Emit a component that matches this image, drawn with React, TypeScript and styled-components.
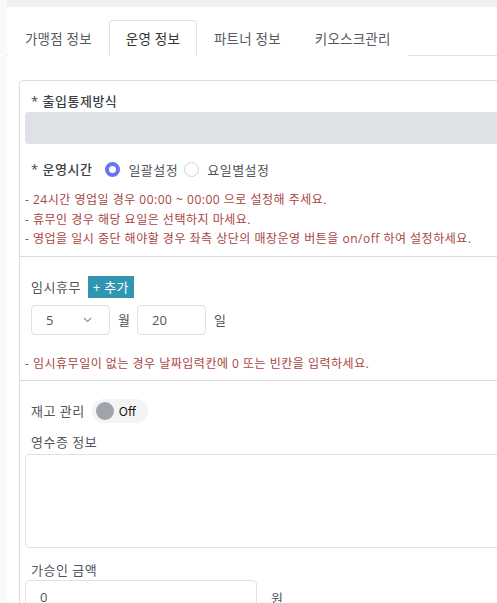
import styled, { createGlobalStyle } from "styled-components";

const GlobalStyle = createGlobalStyle`
    html, body {
        margin: 0;
        padding: 0;
        background: #f8f9fa;
        overflow: hidden;
    }
    body {
        font-family: "Open Sans", "Noto Sans CJK KR", sans-serif;
        color: #495057;
    }
`

const tabs = ["가맹점 정보", "운영 정보", "파트너 정보", "키오스크관리"]

const notes = [
    "- 24시간 영업일 경우 00:00 ~ 00:00 으로 설정해 주세요.",
    "- 휴무인 경우 해당 요일은 선택하지 마세요.",
    "- 영업을 일시 중단 해야할 경우 좌측 상단의 매장운영 버튼을 on/off 하여 설정하세요.",
]

export default function App() {
    return (
        <>
            <GlobalStyle />
            <Page>
                <TopStrip />
                <Content>
                    <TabBar>
                        {tabs.map((t, i) => (
                            <Tab key={t} active={i === 1}>{t}</Tab>
                        ))}
                    </TabBar>

                    <Panel>
                        <Section>
                            <Label strong>* 출입통제방식</Label>
                            <DisabledBar />
                            <Row gap={13}>
                                <Label strong>* 운영시간</Label>
                                <RadioGroup>
                                    <Radio checked />
                                    <RadioText>일괄설정</RadioText>
                                    <Radio />
                                    <RadioText>요일별설정</RadioText>
                                </RadioGroup>
                            </Row>
                            <Notes>
                                {notes.map(n => <Note key={n}>{n}</Note>)}
                            </Notes>
                        </Section>

                        <Section>
                            <Row gap={7}>
                                <Label>임시휴무</Label>
                                <AddButton>+ 추가</AddButton>
                            </Row>
                            <DateRow>
                                <Select>
                                    5
                                    <svg width="9" height="6" viewBox="0 0 9 6">
                                        <path d="M1 1l3.5 3.5L8 1" fill="none" stroke="#8a8f96" strokeWidth="1.1" />
                                    </svg>
                                </Select>
                                <Unit>월</Unit>
                                <Field width={69}>20</Field>
                                <Unit>일</Unit>
                            </DateRow>
                            <Notes top={19}>
                                <Note>- 임시휴무일이 없는 경우 날짜입력칸에 0 또는 빈칸을 입력하세요.</Note>
                            </Notes>
                        </Section>

                        <Section top={19}>
                            <Row gap={7}>
                                <Label>재고 관리</Label>
                                <Toggle>
                                    <Knob />
                                    Off
                                </Toggle>
                            </Row>
                            <Label top={10}>영수증 정보</Label>
                            <TextArea />
                            <Label top={12}>가승인 금액</Label>
                            <AmountRow>
                                <Field width={232} height={34}>0</Field>
                                <Unit>원</Unit>
                            </AmountRow>
                        </Section>
                    </Panel>
                </Content>
            </Page>
        </>
    )
}

const Page = styled.div`
    width: 600px;
    padding-left: 7px;
    min-height: 603px;
`

const TopStrip = styled.div`
    height: 7px;
    background: #eef0f4;
`

const Content = styled.div`
    background: #fff;
    padding-top: 13px;
    padding-bottom: 40px;
`

const TabBar = styled.div`
    display: flex;
    padding-left: 1px;
    border-bottom: 1px solid #dee2e6;
    height: 35px;
`

const Tab = styled.div<{ active?: boolean }>`
    display: flex;
    align-items: center;
    padding: 0 16px;
    font-size: 13.5px;
    letter-spacing: 0.2px;
    color: ${p => p.active ? "#333" : "#555b61"};
    border: 1px solid ${p => p.active ? "#dee2e6" : "transparent"};
    border-bottom: 1px solid ${p => p.active ? "#fff" : "transparent"};
    border-radius: 4px 4px 0 0;
    box-sizing: border-box;
    height: 36px;
    background: #fff;
`

const Panel = styled.div`
    margin: 24px 0 0 12px;
    border: 1px solid #dcdcdc;
    border-radius: 4px 0 0 0;
`

const Section = styled.div<{ top?: number }>`
    padding: 10px 0 7px 5px;
    & + & {
        border-top: 1px solid #dcdcdc;
        padding-top: ${p => p.top ?? 18}px;
    }
`

const Label = styled.div<{ strong?: boolean; top?: number }>`
    padding-left: 6px;
    margin-top: ${p => p.top ?? 0}px;
    font-size: 13px;
    letter-spacing: 0.5px;
    line-height: 20px;
    color: ${p => p.strong ? "#3a3f44" : "#4f555b"};
    font-weight: ${p => p.strong ? 500 : 400};
`

const DisabledBar = styled.div`
    margin-top: 1px;
    height: 32px;
    background: #dee1e6;
    border-radius: 4px;
`

const Row = styled.div<{ gap: number }>`
    display: flex;
    align-items: center;
    gap: ${p => p.gap}px;
    margin-top: 14px;
    height: 22px;
    &:first-child {
        margin-top: 0;
    }
`

const RadioGroup = styled.div`
    display: flex;
    align-items: center;
`

const Radio = styled.span<{ checked?: boolean }>`
    width: 15px;
    height: 15px;
    box-sizing: border-box;
    border-radius: 50%;
    border: ${p => p.checked ? "4px solid #6a72f2" : "1px solid #cfd2d6"};
    background: #fff;
    margin-right: 8px;
`

const RadioText = styled.span`
    font-size: 13px;
    letter-spacing: 0.5px;
    color: #4f555b;
    margin-right: 6px;
`

const Notes = styled.div<{ top?: number }>`
    margin-top: ${p => p.top ?? 10}px;
`

const Note = styled.div`
    font-size: 12px;
    letter-spacing: 0.5px;
    line-height: 19.5px;
    color: #a94442;
    white-space: nowrap;
`

const AddButton = styled.button`
    height: 22px;
    padding: 0 5px;
    border: none;
    background: #2f95b1;
    color: #fff;
    font-family: inherit;
    font-size: 13px;
    letter-spacing: 0.3px;
`

const DateRow = styled.div`
    display: flex;
    align-items: center;
    margin-top: 7px;
    padding-left: 6px;
`

const boxStyle = `
    box-sizing: border-box;
    border: 1px solid #dee2e6;
    border-radius: 4px;
    background: #fff;
    display: flex;
    align-items: center;
    padding-left: 14px;
    font-size: 13px;
    color: #4f555b;
`

const Select = styled.div`
    ${boxStyle}
    width: 79px;
    height: 30px;
    justify-content: space-between;
    padding-right: 17px;
`

const Field = styled.div<{ width: number; height?: number }>`
    ${boxStyle}
    width: ${p => p.width}px;
    height: ${p => p.height ?? 30}px;
`

const Unit = styled.span`
    font-size: 13px;
    color: #4f555b;
    margin: 0 7px 0 8px;
`

const Toggle = styled.div`
    display: flex;
    align-items: center;
    gap: 5px;
    width: 56px;
    height: 24px;
    box-sizing: border-box;
    padding-left: 4px;
    border-radius: 12px;
    background: #f3f4f6;
    font-family: Inter, sans-serif;
    font-size: 12px;
    color: #111;
`

const Knob = styled.span`
    width: 18px;
    height: 18px;
    border-radius: 50%;
    background: #a0a4aa;
`

const TextArea = styled.div`
    margin-top: 2px;
    height: 94px;
    box-sizing: border-box;
    border: 1px solid #dee2e6;
    border-radius: 4px;
`

const AmountRow = styled.div`
    display: flex;
    align-items: center;
    & > span {
        margin-left: 14px;
    }
`
